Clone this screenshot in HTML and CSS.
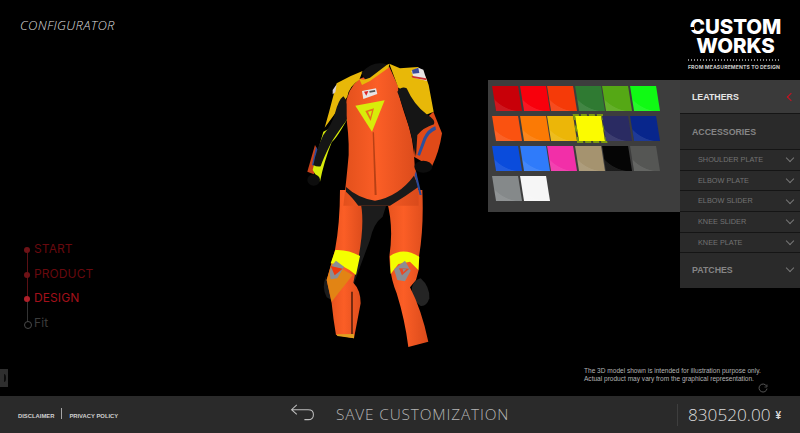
FILE: index.html
```html
<!DOCTYPE html>
<html lang="en">
<head>
<meta charset="utf-8">
<title>Custom Works Configurator</title>
<link rel="stylesheet" href="styles.css">
</head>
<body>
<main class="stage">
  <section class="left">
    <h1 class="title">CONFIGURATOR</h1>
    <ol class="steps">
      <li class="step done">START</li>
      <li class="step done">PRODUCT</li>
      <li class="step current">DESIGN</li>
      <li class="step todo">Fit</li>
    </ol>
    <div class="handle"><span></span></div>
  </section>
  <section class="center">
    <svg class="suit" viewBox="0 0 170 300" width="170" height="300" aria-label="Racing suit 3D model">
      <defs>
        <linearGradient id="orange" x1="0" x2="1" y1="0" y2="0">
          <stop offset="0" stop-color="#e2501c"/><stop offset=".45" stop-color="#fb5e26"/><stop offset="1" stop-color="#d94a1b"/>
        </linearGradient>
      </defs>
      <g transform="translate(0 145) scale(.3333)">
        <path fill="#1c1c1c" d="M205 -20 L300 -20 L278 50 Q250 70 240 120 L190 255 L180 180 Z"/>
        <path fill="#1c1c1c" d="M108 230 Q94 260 110 292 L125 300Z"/>
        <path fill="url(#orange)" d="M150 -30 L225 -30 L210 0 Q226 60 206 170 L190 248 Q212 270 212 310 L192 415 L138 405 Q130 360 125 310 L110 240 L135 150 Q150 70 150 -30Z"/>
        <path fill="#e28414" d="M125 190 L188 225 L125 305 L110 240Z"/>
        <path fill="#3a1608" d="M184 275 L188 275 L188 405 L184 412Z"/>
        <path fill="#e0a020" d="M140 403 L192 402 L192 415 L142 408Z"/>
        <path fill="#f4ff00" d="M136 150 Q175 148 210 168 L198 225 Q165 195 122 190Z"/>
        <path fill="#8d8d92" d="M138 182 L162 200 L142 235 L122 238 Q112 205 138 182Z"/>
        <path fill="#f2380c" d="M122 198 L158 206 L134 226Z"/>
        <path fill="#242424" d="M392 235 Q420 260 418 295 Q410 320 392 318 Q362 300 366 262 Q372 240 392 235Z"/>
        <path fill="url(#orange)" d="M280 -30 L397 -30 Q402 80 387 170 L386 210 L378 240 L360 262 Q395 330 415 425 L355 441 Q345 360 320 280 Q304 240 300 200 L298 170 Q312 80 290 0Z"/>
        <path fill="#f4ff00" d="M300 168 Q340 140 388 170 L385 210 L360 185 L325 192 L302 222Z"/>
        <path fill="#8d8d92" d="M312 208 L345 182 L362 212 L345 244 L322 240Z"/>
        <path fill="#e64a26" d="M327 205 L358 206 L336 226Z"/>
        <path fill="#8d8d92" d="M338 207 L349 208 L340 216Z"/>
      </g>
      <g transform="scale(.3333)">
        <path fill="#e04a18" d="M430 170 L456 235 Q448 290 425 336 L372 305 L378 220 Z"/>
        <path fill="#2d4f9c" d="M436 214 Q412 222 400 250 L382 300 L390 302 L408 255 Q418 232 438 224Z"/>
        <path fill="#c9421a" d="M75 270 L52 350 L72 358 L90 300Z"/>
        <path fill="#2a4a9a" d="M78 275 L66 330 L72 332 L84 285Z"/>
        <path fill="url(#orange)" d="M208 72 Q172 100 165 160 Q178 240 176 300 Q170 370 160 452 L386 452 Q388 390 374 330 Q372 250 345 180 Q322 110 325 95 L298 36 Z"/>
        <path fill="#e8b808" d="M218 48 L208 74 Q176 95 172 125 L104 218 Q118 170 128 130 L140 85 Q180 62 218 48Z"/>
        <path fill="#e8b808" d="M298 26 L330 40 L384 36 Q408 60 416 90 L431 170 L392 186 Q352 110 325 98 Z"/>
        <path fill="#d8ec0a" d="M172 192 Q140 250 125 262 Q102 320 90 380 L68 345 Q74 320 100 230 Q130 215 172 192Z"/>
        <path fill="#151515" d="M160 124 Q172 135 170 160 L170 196 Q130 250 120 270 Q100 310 92 334 Q80 336 70 330 Q80 280 100 240 Q128 205 135 175 Q145 135 160 124Z"/>
        <path fill="#151515" d="M322 110 Q335 92 350 100 Q372 150 410 178 Q438 195 432 208 Q400 218 382 240 L378 305 Q366 240 345 175 Q330 130 322 110Z"/>
        <ellipse fill="#0d0d0d" cx="71" cy="375" rx="19" ry="17"/>
        <ellipse fill="#0d0d0d" cx="400" cy="335" rx="27" ry="18"/>
        <path fill="#111" d="M215 52 Q250 15 290 28 L298 34 Q275 50 240 75 Q222 82 215 52Z"/>
        <path fill="#e8b808" d="M208 72 L216 90 L240 78 L296 38 L298 26 L290 30 L240 68 L222 74Z"/>
        <path fill="#e8e4e4" d="M216 108 L258 100 L262 117 L220 132Z"/>
        <path fill="#d22" d="M222 110 L235 108 L229 122Z"/>
        <path fill="#555" d="M238 108 L255 105 L256 110 L239 113Z"/>
        <path fill="#d8ec0a" d="M196 152 L284 136 L246 230Z"/>
        <path fill="#e8741a" d="M226 168 L252 160 L242 198Z"/>
        <path fill="#d8ec0a" d="M234 170 L246 167 L241 186Z"/>
        <path fill="#b84015" d="M248 232 L252 232 L260 420 L254 420Z"/>
        <path fill="#e8e4e4" d="M364 48 L385 38 L400 44 L411 78 L372 68Z"/>
        <path fill="#3a4a9a" d="M366 45 L385 38 L388 54 L368 56Z"/>
        <path fill="#c33" d="M364 62 L408 70 L410 76 L368 68Z"/>
        <path fill="#d8d0d8" d="M128 105 L140 88 L136 112 L128 118Z"/>
        <path fill="#1a1a1a" d="M168 396 Q205 430 255 437 Q325 425 372 362 L386 395 Q345 425 300 452 L205 452 Q185 425 168 410Z"/>
        <path fill="#2a4a9a" d="M378 348 L395 420 L389 420 L374 360Z"/>
      </g>
    </svg>
  </section>
  <section class="right">
    <div class="logo">
      <div class="logo-word">CUSTOM</div>
      <div class="logo-word">WORKS</div>
      <div class="logo-rule"></div>
      <div class="logo-tag">FROM MEASUREMENTS TO DESIGN</div>
    </div>
    <div class="config">
      <div class="palette">
        <i class="sw c1"></i><i class="sw c2"></i><i class="sw c3"></i><i class="sw c4"></i><i class="sw c5"></i><i class="sw c6"></i>
        <i class="sw c7"></i><i class="sw c8"></i><i class="sw c9"></i><i class="sw c10 selected"></i><i class="sw c11"></i><i class="sw c12"></i>
        <i class="sw c13"></i><i class="sw c14"></i><i class="sw c15"></i><i class="sw c16"></i><i class="sw c17"></i><i class="sw c18"></i>
        <i class="sw c19"></i><i class="sw c20"></i>
      </div>
      <nav class="menu">
        <div class="row head active"><span>LEATHERS</span><b class="chev left-chev"></b></div>
        <div class="row head accessories"><span>ACCESSORIES</span></div>
        <div class="row sub"><span>SHOULDER PLATE</span><b class="chev"></b></div>
        <div class="row sub"><span>ELBOW PLATE</span><b class="chev"></b></div>
        <div class="row sub"><span>ELBOW SLIDER</span><b class="chev"></b></div>
        <div class="row sub"><span>KNEE SLIDER</span><b class="chev"></b></div>
        <div class="row sub"><span>KNEE PLATE</span><b class="chev"></b></div>
        <div class="row head patches"><span>PATCHES</span><b class="chev"></b></div>
      </nav>
    </div>
    <p class="note">The 3D model shown is intended for illustration purpose only.<br>Actual product may vary from the graphical representation.</p>
    <svg class="spin" viewBox="0 0 10 10" width="10" height="10"><path d="M8.600 3.200A4 4 0 1 0 9 5.600" fill="none" stroke="#555" stroke-width="1"/><path d="M9 1.500V4H6.500" fill="none" stroke="#555" stroke-width=".8"/></svg>
  </section>
</main>
<footer class="bar">
  <div class="legal"><span>DISCLAIMER</span><em></em><span>PRIVACY POLICY</span></div>
  <div class="actions">
    <svg class="back" viewBox="0 0 26 20" width="25" height="19"><path d="M7 2 L1.500 7 L7 12 M1.500 7 H19 Q24.500 7 24.500 12 Q24.500 17.500 19 17.500 H15" fill="none" stroke="#bdbdbd" stroke-width="1.100"/></svg>
    <span class="save">SAVE CUSTOMIZATION</span>
  </div>
  <div class="price"><span class="amount">830520.00</span><span class="yen">¥</span></div>
</footer>
</body>
</html>
```
FILE: styles.css
```css
* { box-sizing: border-box; }
html, body { margin: 0; padding: 0; }
body {
  width: 800px; height: 433px; overflow: hidden; background: #000;
  display: flex; flex-direction: column;
  font-family: "Liberation Sans", Arial, sans-serif;
}
.stage { height: 396px; display: grid; grid-template-columns: 290px 198px 312px; }

.left { display: flex; flex-direction: column; align-items: flex-start; }
.title {
  margin: 17px 0 0 20px; font: italic 300 13px/16px "Open Sans", sans-serif;
  color: #dedede; letter-spacing: .32px;
}
.steps { list-style: none; margin: 204px 0 0 0; padding: 0 0 0 23px; }
.step {
  position: relative; height: 24.500px; padding-left: 11px;
  font: 400 12px/24.500px Inter, sans-serif; letter-spacing: .1px;
}
.step::before {
  content: ""; position: absolute; left: 1px; top: 10px; width: 6px; height: 6px;
  border-radius: 50%; background: #6e1216; z-index: 1;
}
.step::after {
  content: ""; position: absolute; left: 3.500px; top: 12px; width: 1px; height: 25px; background: #5a1014;
}
.step:last-child::after { display: none; }
.done { color: #68090e; }
.current { color: #a3101a; }
.current::before { background: #b0202a; }
.current::after { background: #333; }
.todo { color: #3c3c3c; }
.todo::before { background: #000; border: 1px solid #4a4a4a; }
.handle {
  margin-top: 34px; width: 8px; height: 18px; background: #2e2e2e;
  display: flex; align-items: center; justify-content: center;
}
.handle span { width: 4px; height: 8px; border-right: 2px solid #0c0c0c; border-radius: 50%; }

.center { display: flex; align-items: flex-start; justify-content: flex-start; }
.suit { display: block; margin-top: 55px; filter: blur(.4px); overflow: visible; }

.right { display: flex; flex-direction: column; align-items: flex-start; }
.logo { position: relative; margin: 18px 0 0 200px; width: 95px; height: 62px; color: #fff; }
.logo::before {
  content: ""; position: absolute; left: 0; top: 8.500px; width: 6px; height: 3px; background: #000; z-index: 1;
}
.logo-word {
  font: 800 20.500px/18.500px Inter, sans-serif; letter-spacing: -.1px; text-align: center; white-space: nowrap;
}
.logo-rule {
  margin-top: 4px; width: 92px; height: 2px;
  background: repeating-linear-gradient(90deg, #8a8a8a 0 1px, transparent 1px 3px);
}
.logo-tag {
  margin-top: 3px; font: 700 5.150px/7px Inter, sans-serif; color: #c8c8c8; white-space: nowrap; letter-spacing: .1px;
}
.config { display: flex; align-items: flex-start; height: 207px; }
.palette {
  width: 192px; height: 132px; background: #3d3d3d; padding: 5.500px 0 0 6px;
  display: grid; grid-template-columns: repeat(6, 25.500px); column-gap: 2px;
  grid-auto-rows: 24.500px; row-gap: 5.500px;
}
.sw { display: block; position: relative; overflow: hidden; transform: skewX(9deg); }
.sw::after {
  content: ""; position: absolute; inset: 0;
  background: radial-gradient(circle at 95% -25%, transparent 78%, rgba(255,255,255,.09) 80%);
}
.c1 { background: #c80008; } .c2 { background: #f8000c; } .c3 { background: #f53a08; }
.c4 { background: #2f7a32; } .c5 { background: #55a815; } .c6 { background: #10fa14; }
.c7 { background: #fa5210; } .c8 { background: #fb7a05; } .c9 { background: #ecb608; }
.c10 { background: #fbfb00; }
.c11 { background: #2a2b62; } .c12 { background: #08268c; }
.c13 { background: #0a4cdc; } .c14 { background: #2f7bfa; } .c15 { background: #f22fa8; }
.c16 { background: #a5936f; } .c17 { background: #050505; } .c18 { background: #555654; }
.c19 { background: #85898a; } .c20 { background: #f6f6f6; }
.selected { outline: 2px dashed #7c9a10; outline-offset: 0; overflow: visible; }
.selected::after { display: none; }

.menu { width: 120px; background: #2a2a2a; }
.row {
  display: flex; align-items: center; justify-content: space-between;
  padding: 0 7px 0 12px; border-bottom: 1px solid #151515;
}
.head { font: 700 8.800px/12px "Liberation Sans", sans-serif; color: #858585; }
.active { height: 34px; background: #3a3a3a; color: #e6e6e6; }
.accessories { height: 36px; }
.patches { height: 34.500px; padding-bottom: 2px; border-bottom: 0; }
.sub {
  height: 20.700px; padding-left: 18px;
  font: 400 7.300px/10px "Liberation Sans", sans-serif; color: #727272; background: #2a2a2a;
}
.chev {
  display: block; width: 6px; height: 6px; margin-top: -3px;
  border-right: 1px solid #777; border-bottom: 1px solid #777; transform: rotate(45deg);
}
.left-chev {
  margin-top: 0; margin-right: -1px; border: 0; border-left: 1.500px solid #d01020; border-bottom: 1.500px solid #d01020;
}

.note {
  margin: 80px 0 0 96px; font: 400 6.550px/8px "Liberation Sans", sans-serif; color: #b4b4b4; white-space: nowrap;
}
.spin { margin: 0 0 0 270px; display: block; }

.bar {
  height: 37px; background: #2a2a2a; display: grid; grid-template-columns: 290px 387px 123px; align-items: center;
}
.legal {
  display: flex; align-items: center; padding-left: 18px; gap: 7px; margin-top: 2px;
  font: 700 5.850px/8px "Liberation Sans", sans-serif; color: #d0d0d0;
}
.legal em { display: block; width: 1px; height: 11px; background: #a5a5a5; margin-top: -4px; }
.actions { display: flex; align-items: center; gap: 21px; }
.back { display: block; margin-top: -4px; }
.save { font: 300 15.400px/20px "Open Sans", sans-serif; color: #b5b5b5; letter-spacing: .85px; }
.price {
  height: 22px; border-left: 1px solid #3e3e3e; padding-left: 10px;
  display: flex; align-items: center; gap: 5px; color: #dcdcdc;
}
.amount { font: 300 17.200px/22px "Open Sans", sans-serif; }
.yen { font: 700 10px/22px "Liberation Sans", sans-serif; margin-top: 2px; }
```
